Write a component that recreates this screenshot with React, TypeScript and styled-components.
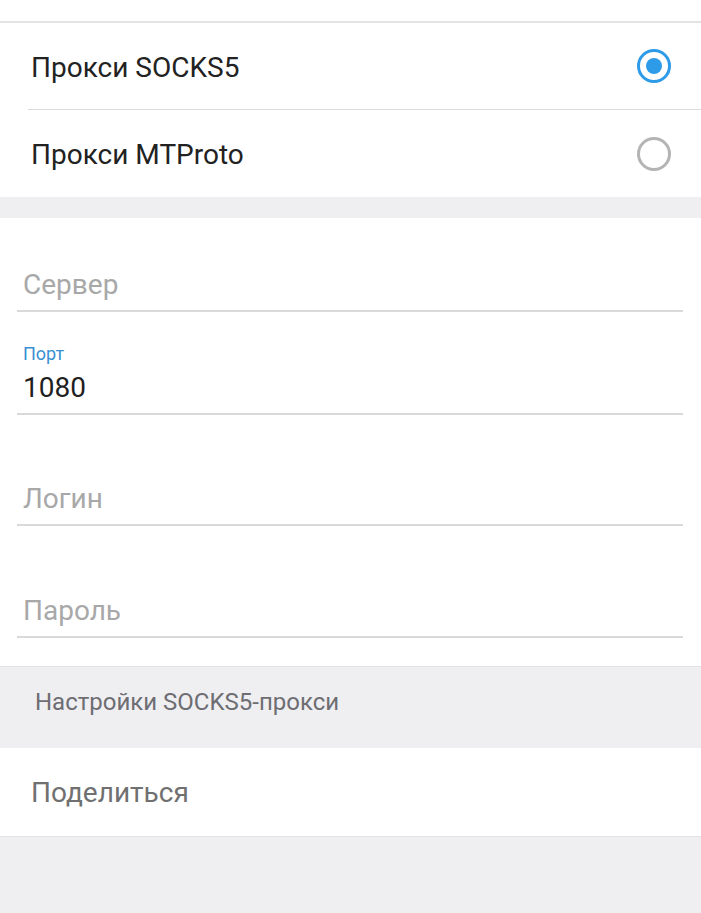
import React from "react";
import styled, { createGlobalStyle } from "styled-components";

const Global = createGlobalStyle`
  html, body { margin: 0; padding: 0; background: #efeff2; }
  body { font-family: Roboto, "Noto Sans", sans-serif; -webkit-font-smoothing: antialiased; }
`;

const Page = styled.div`
  width: 701px;
  min-height: 913px;
  background: #efeff2;
  display: flex;
  flex-direction: column;
`;

const TopStrip = styled.div`
  height: 21px;
  background: #ffffff;
  border-bottom: 2px solid #e3e3e3;
`;

const Card = styled.div`
  background: #ffffff;
  display: flex;
  flex-direction: column;
`;

const RadioRow = styled.div<{ $divider?: boolean }>`
  height: 87px;
  box-sizing: border-box;
  display: flex;
  align-items: center;
  justify-content: space-between;
  margin-left: 28px;
  padding-left: 3px;
  padding-right: 30px;
  border-bottom: ${(p) => (p.$divider ? "1px solid #dcdcdc" : "none")};
`;

const RowText = styled.span`
  font-size: 28px;
  line-height: 34px;
  padding-top: 3px;
  color: #222222;
`;

const Radio = styled.span<{ $checked?: boolean }>`
  width: 34px;
  height: 34px;
  box-sizing: border-box;
  border-radius: 50%;
  border: 3.5px solid ${(p) => (p.$checked ? "#2e9be9" : "#b4b4b4")};
  display: flex;
  align-items: center;
  justify-content: center;
  &::after {
    content: "";
    width: 16px;
    height: 16px;
    border-radius: 50%;
    background: ${(p) => (p.$checked ? "#2e9be9" : "transparent")};
  }
`;

const Gap = styled.div<{ $h: number }>`
  height: ${(p) => p.$h}px;
  background: #efeff2;
`;

const Form = styled.div`
  background: #ffffff;
  padding: 0 18px 0 17px;
  height: 449px;
  box-sizing: border-box;
  border-bottom: 1px solid #e2e2e2;
  display: flex;
  flex-direction: column;
`;

const Field = styled.div<{ $top: number }>`
  margin-top: ${(p) => p.$top}px;
  border-bottom: 2px solid #d9d9d9;
  padding-left: 6px;
  display: flex;
  flex-direction: column;
`;

const FloatLabel = styled.span`
  font-size: 18px;
  color: #3a8fd2;
  line-height: 20px;
  margin-bottom: 7px;
`;

const Input = styled.span<{ $placeholder?: boolean }>`
  font-size: 28px;
  line-height: 34px;
  padding-bottom: 8px;
  color: ${(p) => (p.$placeholder ? "#a8a8a8" : "#1f1f1f")};
`;

const Header = styled.div`
  height: 81px;
  box-sizing: border-box;
  padding: 21px 0 0 35px;
  font-size: 24px;
  line-height: 28px;
  color: #6d6d72;
`;

const ShareCard = styled.div`
  background: #ffffff;
  height: 89px;
  box-sizing: border-box;
  padding: 28px 0 0 31px;
  font-size: 28px;
  line-height: 34px;
  color: #707070;
  border-bottom: 1px solid #e2e2e2;
`;

export default function App() {
  return (
    <Page>
      <Global />
      <TopStrip />
      <Card>
        <RadioRow $divider>
          <RowText>Прокси SOCKS5</RowText>
          <Radio $checked />
        </RadioRow>
        <RadioRow>
          <RowText>Прокси MTProto</RowText>
          <Radio />
        </RadioRow>
      </Card>
      <Gap $h={21} />
      <Form>
        <Field $top={50}>
          <Input $placeholder>Сервер</Input>
        </Field>
        <Field $top={32}>
          <FloatLabel>Порт</FloatLabel>
          <Input>1080</Input>
        </Field>
        <Field $top={67}>
          <Input $placeholder>Логин</Input>
        </Field>
        <Field $top={68}>
          <Input $placeholder>Пароль</Input>
        </Field>
      </Form>
      <Header>Настройки SOCKS5-прокси</Header>
      <ShareCard>Поделиться</ShareCard>
    </Page>
  );
}
